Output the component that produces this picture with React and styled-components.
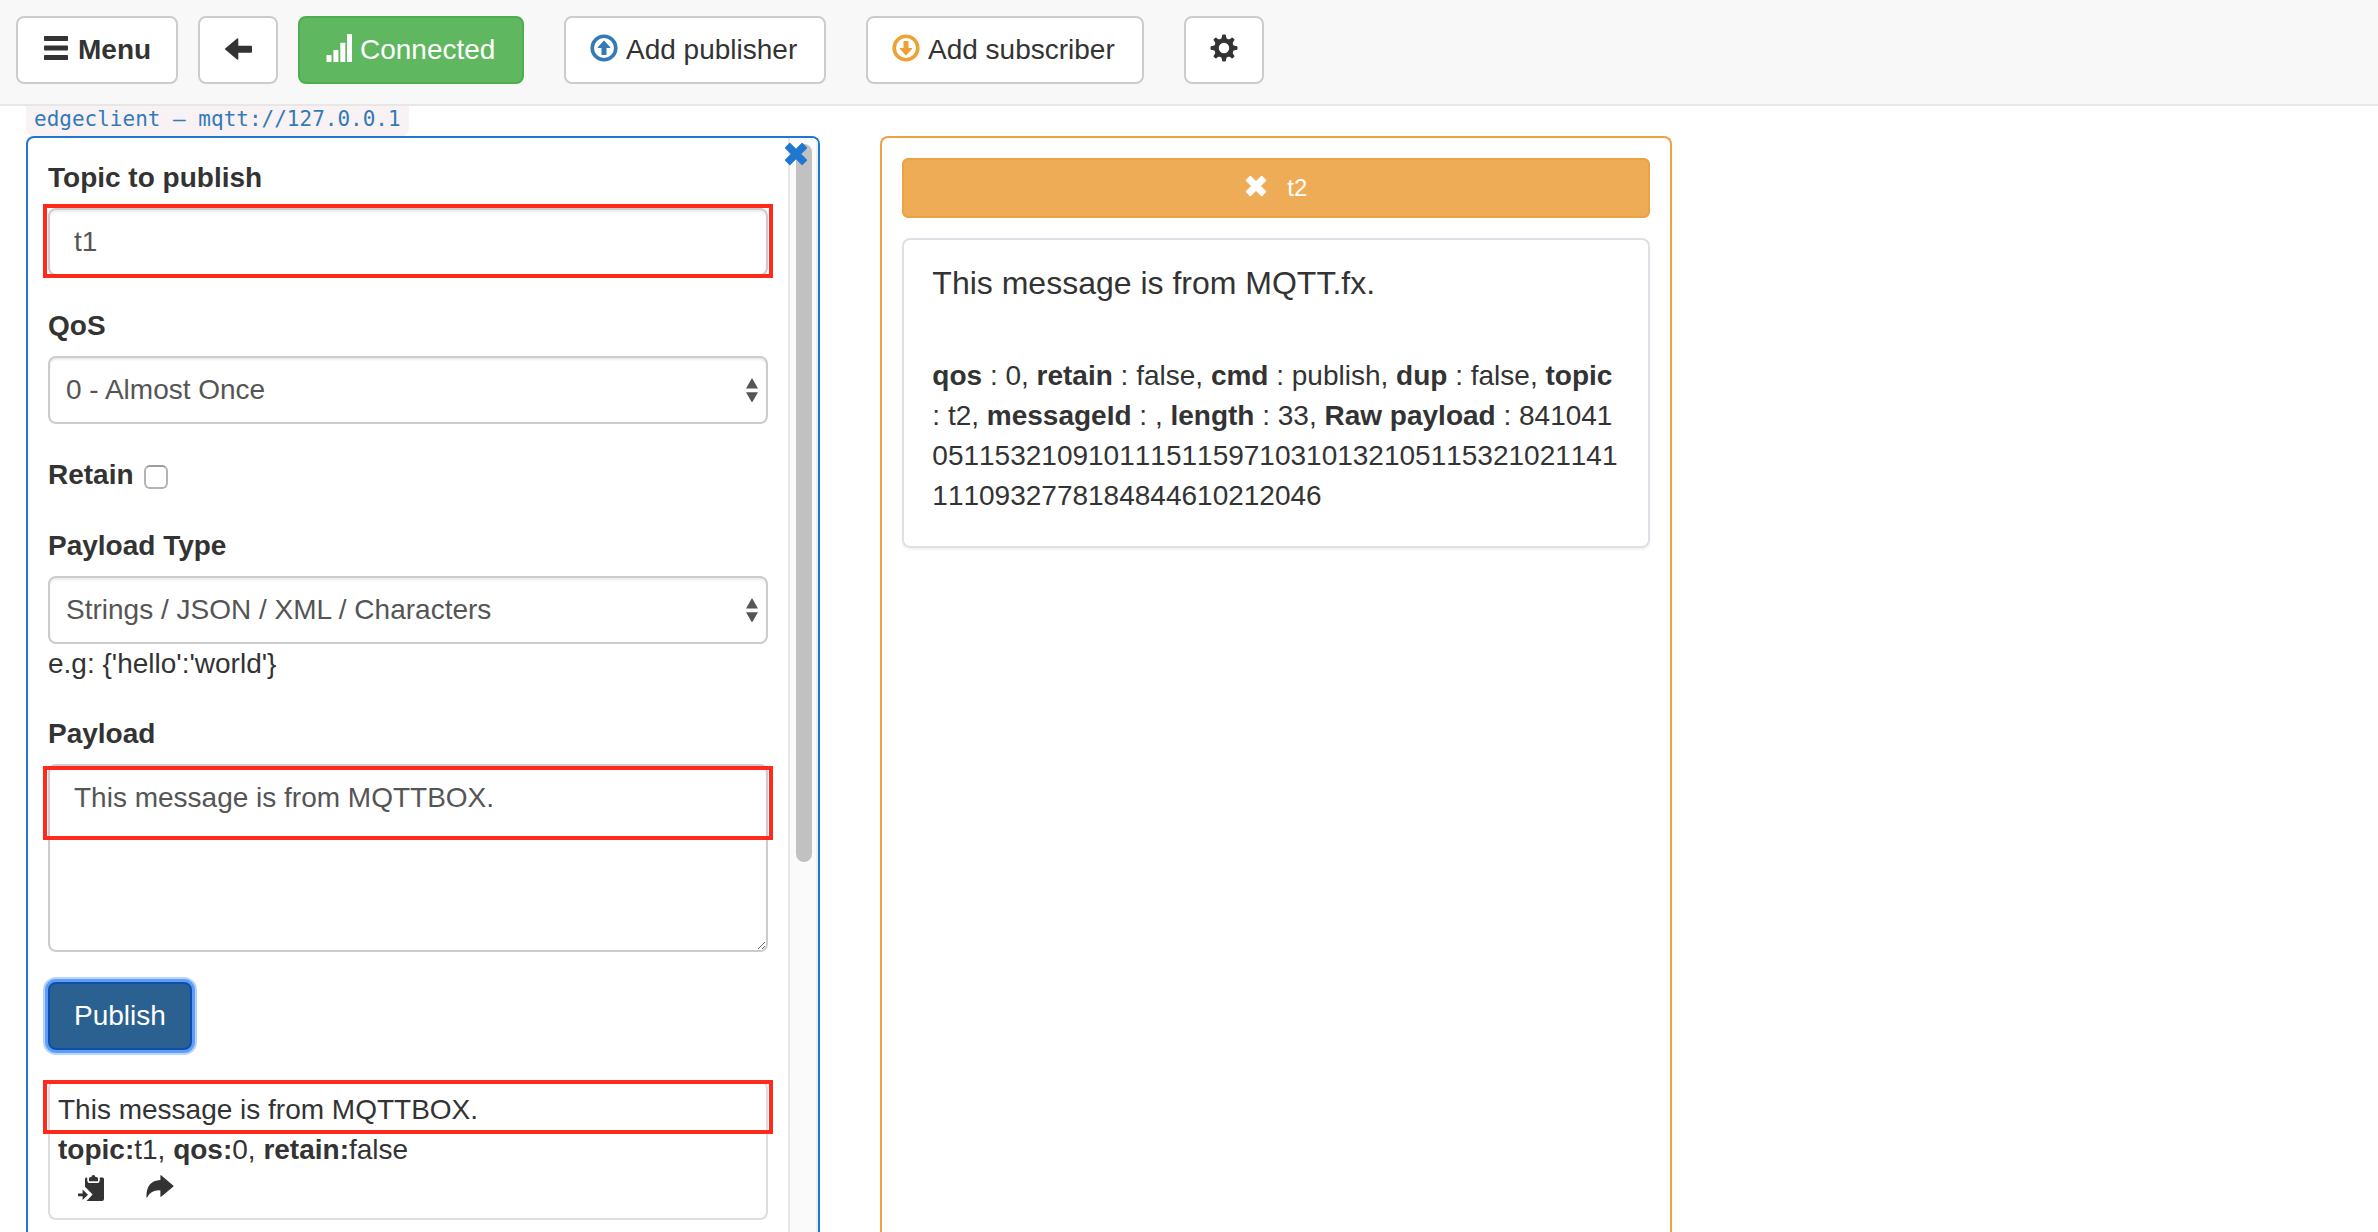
import React from "react";
import styled, { createGlobalStyle, css } from "styled-components";

const sans = `"Liberation Sans", Arial, sans-serif`;

const GlobalStyle = createGlobalStyle`
  *, *::before, *::after { box-sizing: border-box; }
  body {
    margin: 0;
    background: #fff;
    color: #333;
    font: 28px/40px ${sans};
  }
  button, input, select, textarea { font: inherit; }
`;

const Page = styled.div`
  display: flex;
  flex-direction: column;
  height: 100vh;
  overflow: hidden;
`;

const Toolbar = styled.header`
  display: flex;
  gap: 40px;
  padding: 16px 16px 20px;
  background: #f8f8f8;
  border-bottom: 2px solid #e7e7e7;
`;

const ToolGroup = styled.div`
  display: flex;
  gap: 20px;
`;

const Button = styled.button`
  display: flex;
  align-items: center;
  gap: 8px;
  min-width: ${(p) => p.$minWidth || 80}px;
  padding: 12px 24px;
  border: 2px solid #ccc;
  border-radius: 8px;
  background: #fff;
  color: #333;
  font-weight: ${(p) => (p.$bold ? 700 : 400)};
  white-space: nowrap;
  cursor: pointer;
  ${(p) =>
    p.$tone === "success" &&
    css`
      background: #5fb760;
      border-color: #4cae4c;
      color: #fff;
    `}
  ${(p) =>
    p.$tone === "primary" &&
    css`
      background: #2a6190;
      border-color: #0d4fa8;
      color: #fff;
      box-shadow: 0 0 0 3px #5f9df7, 0 0 0 5px #b7d4fc;
    `}
`;

const Glyph = styled.svg`
  flex: none;
  width: ${(p) => p.$size || 28}px;
  height: ${(p) => p.$size || 28}px;
  margin-bottom: 4px;
  fill: currentColor;
  color: ${(p) => p.$color || "inherit"};
`;

const Content = styled.main`
  flex: 1;
  min-height: 0;
  display: flex;
  flex-direction: column;
  align-items: flex-start;
  padding: 0 26px;
`;

const ClientLink = styled.a`
  padding: 0 8px;
  height: 30px;
  border-radius: 0 0 8px 8px;
  background: #f9f2f4;
  color: #337ab7;
  font: 21px/26px "DejaVu Sans Mono", monospace;
  text-decoration: none;
`;

const Columns = styled.div`
  flex: 1;
  min-height: 0;
  align-self: stretch;
  display: flex;
  gap: 60px;
`;

const Panel = styled.section`
  position: relative;
  display: flex;
  flex: 0 0 ${(p) => p.$width};
  min-width: 0;
  border: 2px solid ${(p) => p.$color};
  border-bottom: 0;
  border-radius: 8px 8px 0 0;
  overflow: hidden;
`;

const PanelBody = styled.div`
  flex: 1;
  min-width: 0;
  display: flex;
  flex-direction: column;
  gap: ${(p) => p.$gap}px;
  padding: 20px;

  & > * {
    flex-shrink: 0;
  }
`;

const ScrollTrack = styled.div`
  flex: none;
  width: 30px;
  padding: 6px 4px 0 6px;
  background: #fafafa;
  border-left: 2px solid #e7e7e7;
  border-right: 2px solid #ededed;
`;

const ScrollThumb = styled.div`
  height: 66%;
  border-radius: 8px;
  background: #c1c1c1;
`;

const CloseButton = styled.button`
  position: absolute;
  top: 4px;
  right: 10px;
  display: flex;
  padding: 0;
  border: 0;
  background: none;
  color: #2077cf;
  cursor: pointer;
`;

const Field = styled.div`
  display: flex;
  flex-direction: column;
`;

const Label = styled.label`
  margin-bottom: 10px;
  font-weight: 700;
`;

const CheckRow = styled.div`
  display: flex;
  align-items: center;
  gap: 10px;
  height: 42px;
`;

const CheckLabel = styled.label`
  font-weight: 700;
`;

const Checkbox = styled.input`
  appearance: none;
  width: 24px;
  height: 24px;
  margin: 4px 0 0;
  border: 2px solid #b4b4b4;
  border-top-color: #9c9c9c;
  border-radius: 6px;
  background: #fff;
`;

const controlStyle = css`
  display: block;
  width: 100%;
  border: 2px solid #ccc;
  border-radius: 8px;
  background: #fff;
  color: #555;
  box-shadow: inset 0 2px 2px rgba(0, 0, 0, 0.075);
  outline: none;
`;

const TextInput = styled.input`
  ${controlStyle}
  height: 68px;
  padding: 12px 24px;
`;

const TextArea = styled.textarea`
  ${controlStyle}
  height: 188px;
  padding: 12px 24px;
  resize: vertical;
`;

const ControlWrap = styled.div`
  position: relative;
`;

const Select = styled.select`
  ${controlStyle}
  appearance: none;
  height: 68px;
  padding: 12px 40px 12px 16px;
`;

const SelectArrows = styled.svg`
  position: absolute;
  top: 22px;
  right: 10px;
  width: 12px;
  height: 24px;
  fill: #555;
  pointer-events: none;
`;

const Highlight = styled.div`
  position: absolute;
  top: ${(p) => p.$top}px;
  left: -5px;
  right: -5px;
  height: ${(p) => p.$height}px;
  border: 4px solid #ff291c;
  pointer-events: none;
`;

const ButtonRow = styled.div`
  display: flex;
`;

const Sent = styled.article`
  position: relative;
`;

const SentBody = styled.div`
  padding: 8px;
  border: 2px solid #ddd;
  border-radius: 8px;
`;

const SentActions = styled.div`
  display: flex;
  align-items: center;
  gap: 40px;
  height: 40px;
  padding-left: 20px;
`;

const IconButton = styled.button`
  display: flex;
  padding: 0;
  border: 0;
  background: none;
  color: #333;
  cursor: pointer;
`;

const TopicButton = styled.button`
  display: flex;
  align-items: center;
  justify-content: center;
  gap: 20px;
  height: 60px;
  border: 2px solid #eea23f;
  border-radius: 6px;
  background: #efac57;
  color: #fff;
  font-size: 24px;
  cursor: pointer;
`;

const MessageCard = styled.article`
  padding: 20px 28px 30px;
  border: 2px solid #dfdfe6;
  border-radius: 8px;
  box-shadow: 0 2px 2px rgba(0, 0, 0, 0.05);
`;

const MessageTitle = styled.p`
  margin: 0 0 50px;
  font-size: 32px;
  line-height: 46px;
`;

const MessageMeta = styled.p`
  margin: 0;
  font-kerning: none;
  word-break: break-all;
`;

const MenuIcon = () => (
  <Glyph viewBox="0 0 28 28" aria-hidden="true">
    <rect x="2" y="2" width="24" height="5" rx="0.8" />
    <rect x="2" y="11.5" width="24" height="5" rx="0.8" />
    <rect x="2" y="21" width="24" height="5" rx="0.8" />
  </Glyph>
);

const BackIcon = () => (
  <Glyph viewBox="0 0 28 28" aria-hidden="true">
    <path d="M1.2 15.6Q.7 15 1.2 14.4L13 4.6Q14.3 3.8 14.3 5.2V11.7H27Q28 11.7 28 12.7V17.8Q28 18.8 27 18.8H14.3V25Q14.3 26.4 13 25.4Z" />
  </Glyph>
);

const SignalIcon = () => (
  <Glyph viewBox="0 0 28 28" aria-hidden="true">
    <rect x="2.5" y="21" width="5" height="7" rx="0.5" />
    <rect x="9.4" y="16" width="5" height="12" rx="0.5" />
    <rect x="16.3" y="8.7" width="5" height="19.3" rx="0.5" />
    <rect x="23" y="0" width="5" height="28" rx="0.5" />
  </Glyph>
);

const CircleArrowIcon = ({ color, down }) => (
  <Glyph viewBox="0 0 28 28" $color={color} aria-hidden="true">
    <circle cx="14" cy="14" r="11.8" fill="none" stroke="currentColor" strokeWidth="3.6" />
    <path
      transform={down ? "rotate(180 14 14)" : undefined}
      d="M13.4 6.9Q14 6.3 14.6 6.9L20.2 13.2Q20.6 14.1 19.7 14.1H16.5V20.5Q16.5 21 16 21H12Q11.5 21 11.5 20.5V14.1H8.3Q7.4 14.1 7.8 13.2Z"
    />
  </Glyph>
);

const gearTeeth = [0, 45, 90, 135, 180, 225, 270, 315];

const GearIcon = () => (
  <Glyph viewBox="0 0 28 28" aria-hidden="true">
    <circle cx="14" cy="14" r="7.5" fill="none" stroke="currentColor" strokeWidth="4.6" />
    {gearTeeth.map((a) => (
      <path key={a} transform={`rotate(${a} 14 14)`} d="M11 5.6L12 2.4V1.8Q12 .5 13.2 .5H14.8Q16 .5 16 1.8V2.4L17 5.6Z" />
    ))}
  </Glyph>
);

const CrossIcon = ({ size }) => (
  <Glyph viewBox="0 0 24 24" $size={size} aria-hidden="true">
    <g transform="rotate(45 12 12)">
      <rect x="-0.5" y="8.2" width="25" height="7.6" rx="1" />
      <rect x="8.2" y="-0.5" width="7.6" height="25" rx="1" />
    </g>
  </Glyph>
);

const PasteIcon = () => (
  <Glyph viewBox="0 0 28 28" aria-hidden="true">
    <path d="M7 5Q7 3.4 8.6 3.4H9.2V5.4Q9.2 9 12 9H19Q21.8 9 21.8 5.4V3.4H24.4Q26 3.4 26 5V25Q26 27 24 27H8.6L14.6 20.6L7 12.8Z" />
    <path d="M11 4.6Q11 3 12.8 3H13.4Q13.6 1 15.4 1T17.4 3H18.2Q20 3 20 4.6V7.2H11Z" />
    <path d="M0 19.4H4.6V15.6L10 20.8L4.6 26V22.2H0Z" />
  </Glyph>
);

const ShareIcon = () => (
  <Glyph viewBox="0 0 28 28" aria-hidden="true">
    <path d="M.4 23Q.2 6.6 14.4 6V1.8Q14.4 .6 15.4 1.4L27.2 11.6Q27.8 12.2 27.2 12.8L15.4 22.6Q14.4 23.4 14.4 22.2V16.4Q5.4 15.6 1.4 23Q.8 24 .4 23Z" />
  </Glyph>
);

const Arrows = () => (
  <SelectArrows viewBox="0 0 12 24" aria-hidden="true">
    <path d="M6 0L12 10.4H0ZM6 24.6L0 14.2H12Z" />
  </SelectArrows>
);

const messageFields = [
  ["qos", " : 0, "],
  ["retain", " : false, "],
  ["cmd", " : publish, "],
  ["dup", " : false, "],
  ["topic", " : t2, "],
  ["messageId", " : , "],
  ["length", " : 33, "],
  ["Raw payload", " : 8410410511532109101115115971031013210511532102114111109327781848446" + "10212046"],
];

export default function App() {
  return (
    <>
      <GlobalStyle />
      <Page>
        <Toolbar>
          <ToolGroup>
            <Button type="button" $bold $minWidth={162}><MenuIcon />Menu</Button>
            <Button type="button" aria-label="Back"><BackIcon /></Button>
            <Button type="button" $tone="success" $minWidth={226}><SignalIcon />Connected</Button>
          </ToolGroup>
          <Button type="button" $minWidth={262}><CircleArrowIcon color="#337ab7" />Add publisher</Button>
          <Button type="button" $minWidth={278}><CircleArrowIcon color="#eea236" down />Add subscriber</Button>
          <Button type="button" aria-label="Settings"><GearIcon /></Button>
        </Toolbar>

        <Content>
          <ClientLink href="#client">edgeclient – mqtt://127.0.0.1</ClientLink>
          <Columns>
            <Panel $color="#2077cf" $width="34.15%">
              <PanelBody $gap={30}>
                <Field>
                  <Label htmlFor="topic">Topic to publish</Label>
                  <ControlWrap>
                    <TextInput id="topic" type="text" defaultValue="t1" />
                    <Highlight $top={-4} $height={74} />
                  </ControlWrap>
                </Field>
                <Field>
                  <Label htmlFor="qos">QoS</Label>
                  <ControlWrap>
                    <Select id="qos" defaultValue="0">
                      <option value="0">0 - Almost Once</option>
                    </Select>
                    <Arrows />
                  </ControlWrap>
                </Field>
                <CheckRow>
                  <CheckLabel htmlFor="retain">Retain</CheckLabel>
                  <Checkbox id="retain" type="checkbox" />
                </CheckRow>
                <Field>
                  <Label htmlFor="payload-type">Payload Type</Label>
                  <ControlWrap>
                    <Select id="payload-type" defaultValue="text">
                      <option value="text">Strings / JSON / XML / Characters</option>
                    </Select>
                    <Arrows />
                  </ControlWrap>
                  <span>{"e.g: {'hello':'world'}"}</span>
                </Field>
                <Field>
                  <Label htmlFor="payload">Payload</Label>
                  <ControlWrap>
                    <TextArea id="payload" defaultValue="This message is from MQTTBOX." />
                    <Highlight $top={2} $height={74} />
                  </ControlWrap>
                </Field>
                <ButtonRow>
                  <Button type="button" $tone="primary" $minWidth={144}>Publish</Button>
                </ButtonRow>
                <Sent>
                  <SentBody>
                    <div>This message is from MQTTBOX.</div>
                    <div>
                      <b>topic:</b>t1, <b>qos:</b>0, <b>retain:</b>false
                    </div>
                    <SentActions>
                      <IconButton type="button" aria-label="Copy to form"><PasteIcon /></IconButton>
                      <IconButton type="button" aria-label="Publish again"><ShareIcon /></IconButton>
                    </SentActions>
                  </SentBody>
                  <Highlight $top={0} $height={54} />
                </Sent>
              </PanelBody>
              <ScrollTrack>
                <ScrollThumb />
              </ScrollTrack>
              <CloseButton type="button" aria-label="Remove publisher"><CrossIcon size={24} /></CloseButton>
            </Panel>

            <Panel $color="#eda142" $width="34.05%">
              <PanelBody $gap={20}>
                <TopicButton type="button"><CrossIcon size={22} />t2</TopicButton>
                <MessageCard>
                  <MessageTitle>This message is from MQTT.fx.</MessageTitle>
                  <MessageMeta>
                    {messageFields.map(([name, value]) => (
                      <React.Fragment key={name}>
                        <b>{name}</b>
                        {value}
                      </React.Fragment>
                    ))}
                  </MessageMeta>
                </MessageCard>
              </PanelBody>
            </Panel>
          </Columns>
        </Content>
      </Page>
    </>
  );
}
